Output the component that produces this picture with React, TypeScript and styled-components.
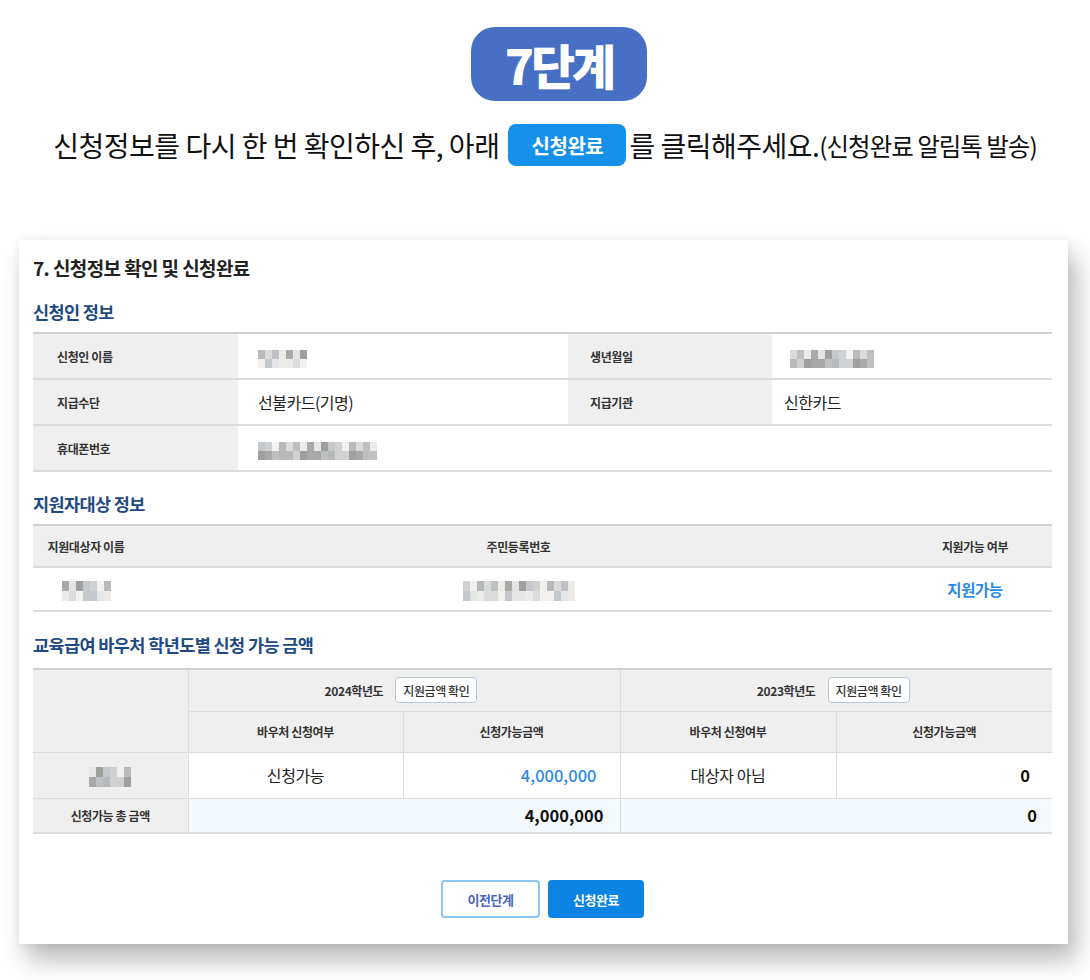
import React from "react";
import styled, { createGlobalStyle } from "styled-components";

const GlobalStyle = createGlobalStyle`
  html, body {
    margin: 0;
    padding: 0;
    background: #ffffff;
  }
  body {
    font-family: "Noto Sans CJK KR", "Noto Sans", sans-serif;
    color: #222;
  }
`;

const Page = styled.div`
  width: 1090px;
  padding-top: 27px;
  padding-bottom: 40px;
  box-sizing: border-box;
`;

const Header = styled.div`
  display: flex;
  flex-direction: column;
  align-items: center;
`;

const StepBadge = styled.div`
  width: 176px;
  height: 74px;
  margin-left: 28px;
  border-radius: 24px;
  background: #4770c4;
  color: #fff;
  display: flex;
  align-items: center;
  justify-content: center;
  font-size: 48px;
  font-weight: 900;
  letter-spacing: -3px;
`;

const Instruction = styled.div`
  margin-top: 23px;
  height: 42px;
  display: flex;
  align-items: center;
  font-size: 28px;
  letter-spacing: -0.5px;
  color: #111;
  white-space: nowrap;
`;

const InlineBtn = styled.span`
  display: inline-flex;
  align-items: center;
  justify-content: center;
  width: 118px;
  height: 42px;
  margin: 0 3px 0 9px;
  border-radius: 8px;
  background: #1590eb;
  color: #fff;
  font-size: 20px;
  font-weight: 700;
  letter-spacing: -0.5px;
`;

const Small = styled.span`
  font-size: 24.5px;
  letter-spacing: -1px;
`;

const Card = styled.div`
  margin: 74px 0 0 19px;
  width: 1049px;
  box-sizing: border-box;
  background: #fff;
  padding: 18px 16px 26px 14px;
  box-shadow: 8px 16px 24px rgba(0, 0, 0, 0.28), 0 0 8px rgba(0, 0, 0, 0.06);
`;

const Title = styled.h2`
  margin: 0;
  font-size: 19px;
  line-height: 20px;
  font-weight: 700;
  color: #222;
  letter-spacing: -0.6px;
`;

const Section = styled.h3<{ $top: number }>`
  margin: ${(p) => p.$top}px 0 0;
  font-size: 17.5px;
  line-height: 20px;
  font-weight: 700;
  color: #1e4a84;
  letter-spacing: -0.6px;
`;

const Table = styled.table<{ $top: number }>`
  width: 1019px;
  margin-top: ${(p) => p.$top}px;
  border-collapse: collapse;
  table-layout: fixed;
  border-top: 2px solid #d0d0d0;
`;

const Row = styled.tr<{ $h: number }>`
  height: ${(p) => p.$h}px;
  border-bottom: 2px solid #dcdcdc;
`;

const Label = styled.th<{ $pad?: number }>`
  background: #efefef;
  font-size: 12px;
  font-weight: 700;
  color: #333;
  text-align: left;
  padding: 0 0 0 ${(p) => p.$pad ?? 24}px;
  letter-spacing: -0.4px;
`;

const Value = styled.td<{ $pad?: number }>`
  font-size: 16px;
  color: #222;
  padding: 0 0 0 ${(p) => p.$pad ?? 20}px;
  letter-spacing: -0.5px;
`;

const Head = styled.th`
  background: #efefef;
  font-size: 12px;
  font-weight: 700;
  color: #333;
  text-align: center;
  padding: 0;
  letter-spacing: -0.4px;
`;

const Cell = styled.td`
  font-size: 16px;
  color: #222;
  text-align: center;
  padding: 0;
  letter-spacing: -0.4px;
`;

const Status = styled.span`
  color: #2e8ae6;
  font-weight: 700;
  font-size: 15.5px;
`;

const GridTable = styled.table`
  width: 1019px;
  margin-top: 13px;
  border-collapse: collapse;
  table-layout: fixed;
  border-top: 2px solid #d0d0d0;
  border-bottom: 2px solid #dcdcdc;

  th,
  td {
    border: 1px solid #dcdcdc;
  }
  tr > :first-child {
    border-left: none;
  }
  tr > :last-child {
    border-right: none;
  }
`;

const GRow = styled.tr<{ $h: number }>`
  height: ${(p) => p.$h}px;
`;

const GHead = styled.th`
  background: #efefef;
  font-size: 12px;
  font-weight: 700;
  color: #333;
  text-align: center;
  letter-spacing: -0.4px;
`;

const GCell = styled.td<{ $align?: string; $bg?: string; $pad?: number }>`
  background: ${(p) => p.$bg || "#fff"};
  font-size: 16px;
  color: #222;
  text-align: ${(p) => p.$align || "center"};
  padding: 0 ${(p) => p.$pad ?? 0}px 0 0;
  letter-spacing: -0.4px;
`;

const Total = styled.span`
  font-size: 16.5px;
  font-weight: 600;
  color: #111;
  letter-spacing: 0;
`;

const Amount = styled.span`
  font-size: 16.5px;
  color: #2e8ae6;
  font-weight: 500;
  letter-spacing: 0;
`;

const YearHead = styled.div`
  display: flex;
  align-items: center;
  justify-content: center;
  gap: 12px;
  padding-right: 6px;
`;

const CheckBtn = styled.span`
  display: inline-flex;
  align-items: center;
  height: 24px;
  padding: 0 7px;
  background: #fff;
  border: 1px solid #b7c7da;
  border-radius: 4px;
  font-size: 12px;
  font-weight: 500;
  color: #333;
`;

const Actions = styled.div`
  margin-top: 46px;
  display: flex;
  justify-content: center;
  gap: 8px;
`;

const Button = styled.button<{ $primary?: boolean }>`
  width: ${(p) => (p.$primary ? 96 : 99)}px;
  height: 38px;
  border-radius: 4px;
  font-family: inherit;
  font-size: 13px;
  font-weight: 700;
  letter-spacing: -0.4px;
  border: 2px solid ${(p) => (p.$primary ? "#0b84e3" : "#8cc4f2")};
  background: ${(p) => (p.$primary ? "#0b84e3" : "#fff")};
  color: ${(p) => (p.$primary ? "#fff" : "#4a64c0")};
`;

const MosaicBox = styled.span`
  display: inline-flex;
  flex-direction: column;
  vertical-align: middle;
`;

const MosaicRow = styled.span`
  display: flex;
`;

const Tile = styled.span<{ $c: string; $w: number; $h: number }>`
  width: ${(p) => p.$w}px;
  height: ${(p) => p.$h}px;
  background: ${(p) => p.$c};
`;

const shades = ["#ecebe8", "#b8b9ba", "#c6c9cb", "#a9aaa8", "#d9dbdc", "#cfd1d3", "#e4e5e6", "#bfc0c1", "#f2f1ee", "#9fa09e"];

const Mosaic = ({ cols, seed, w = 7, h = 9 }: { cols: number; seed: number; w?: number; h?: number }) => (
  <MosaicBox>
    {[0, 1].map((r) => (
      <MosaicRow key={r}>
        {Array.from({ length: cols }).map((_, i) => (
          <Tile key={i} $w={w} $h={h} $c={shades[(seed + i * 3 + r * 7 + ((i * r) % 4)) % shades.length]} />
        ))}
      </MosaicRow>
    ))}
  </MosaicBox>
);

const App = () => {
  return (
    <Page>
      <GlobalStyle />
      <Header>
        <StepBadge>7단계</StepBadge>
        <Instruction>
          신청정보를 다시 한 번 확인하신 후, 아래
          <InlineBtn>신청완료</InlineBtn>를 클릭해주세요.<Small>(신청완료 알림톡 발송)</Small>
        </Instruction>
      </Header>

      <Card>
        <Title>7. 신청정보 확인 및 신청완료</Title>

        <Section $top={24}>신청인 정보</Section>
        <Table $top={10}>
          <colgroup>
            <col style={{ width: 205 }} />
            <col style={{ width: 330 }} />
            <col style={{ width: 204 }} />
            <col />
          </colgroup>
          <tbody>
            <Row $h={46}>
              <Label>신청인 이름</Label>
              <Value>
                <Mosaic cols={7} seed={1} />
              </Value>
              <Label $pad={22}>생년월일</Label>
              <Value $pad={18}>
                <Mosaic cols={12} seed={4} />
              </Value>
            </Row>
            <Row $h={46}>
              <Label>지급수단</Label>
              <Value>선불카드(기명)</Value>
              <Label $pad={22}>지급기관</Label>
              <Value $pad={12}>신한카드</Value>
            </Row>
            <Row $h={46}>
              <Label>휴대폰번호</Label>
              <Value colSpan={3}>
                <Mosaic cols={17} seed={2} />
              </Value>
            </Row>
          </tbody>
        </Table>

        <Section $top={22}>지원자대상 정보</Section>
        <Table $top={10}>
          <colgroup>
            <col style={{ width: 106 }} />
            <col style={{ width: 759 }} />
            <col />
          </colgroup>
          <tbody>
            <Row $h={42}>
              <Head>지원대상자 이름</Head>
              <Head>주민등록번호</Head>
              <Head>지원가능 여부</Head>
            </Row>
            <Row $h={44}>
              <Cell>
                <Mosaic cols={7} seed={3} w={7} h={10} />
              </Cell>
              <Cell>
                <Mosaic cols={16} seed={5} w={7} h={10} />
              </Cell>
              <Cell>
                <Status>지원가능</Status>
              </Cell>
            </Row>
          </tbody>
        </Table>

        <Section $top={23}>교육급여 바우처 학년도별 신청 가능 금액</Section>
        <GridTable>
          <colgroup>
            <col style={{ width: 155 }} />
            <col style={{ width: 215 }} />
            <col style={{ width: 217 }} />
            <col style={{ width: 216 }} />
            <col />
          </colgroup>
          <tbody>
            <GRow $h={42}>
              <GHead rowSpan={2} />
              <GHead colSpan={2}>
                <YearHead>
                  2024학년도<CheckBtn>지원금액 확인</CheckBtn>
                </YearHead>
              </GHead>
              <GHead colSpan={2}>
                <YearHead>
                  2023학년도<CheckBtn>지원금액 확인</CheckBtn>
                </YearHead>
              </GHead>
            </GRow>
            <GRow $h={41}>
              <GHead>바우처 신청여부</GHead>
              <GHead>신청가능금액</GHead>
              <GHead>바우처 신청여부</GHead>
              <GHead>신청가능금액</GHead>
            </GRow>
            <GRow $h={46}>
              <GCell $bg="#efefef">
                <Mosaic cols={6} seed={6} w={7} h={10} />
              </GCell>
              <GCell>신청가능</GCell>
              <GCell $align="right" $pad={23}>
                <Amount>4,000,000</Amount>
              </GCell>
              <GCell>대상자 아님</GCell>
              <GCell $align="right" $pad={22}>
                <Total>0</Total>
              </GCell>
            </GRow>
            <GRow $h={35}>
              <GHead>신청가능 총 금액</GHead>
              <GCell colSpan={2} $align="right" $bg="#f3f9fd" $pad={16}>
                <Total>4,000,000</Total>
              </GCell>
              <GCell colSpan={2} $align="right" $bg="#f3f9fd" $pad={15}>
                <Total>0</Total>
              </GCell>
            </GRow>
          </tbody>
        </GridTable>

        <Actions>
          <Button>이전단계</Button>
          <Button $primary>신청완료</Button>
        </Actions>
      </Card>
    </Page>
  );
};

export default App;
